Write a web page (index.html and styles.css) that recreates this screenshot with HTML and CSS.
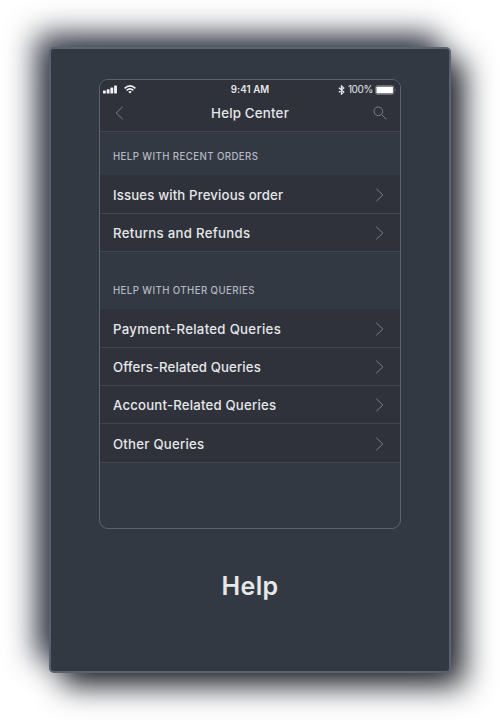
FILE: index.html
```
<!DOCTYPE html>
<html lang="en">
<head>
<meta charset="utf-8">
<title>Help Center</title>
<link rel="stylesheet" href="styles.css">
</head>
<body>
<main class="card">
  <div class="screen">
    <header class="header">
      <div class="status">
        <div class="status-left">
          <svg width="14" height="9" viewBox="0 0 14 9" fill="#f2f2f3"><rect x="0" y="5.4" width="2.8" height="3.2" rx=".6"/><rect x="3.7" y="4.2" width="2.8" height="4.4" rx=".6"/><rect x="7.4" y="2.4" width="2.8" height="6.2" rx=".6"/><rect x="11.1" y=".4" width="2.8" height="8.2" rx=".6"/></svg>
          <svg width="12" height="9" viewBox="0 0 12 9" fill="none" stroke="#f2f2f3" stroke-width="1.6"><path d="M.6 3.3Q6-1.5 11.4 3.3M2.6 5.4Q6 2.5 9.4 5.4"/><path d="M4.2 6.8Q6 5.4 7.8 6.8L6 8.6Z" fill="#f2f2f3" stroke="none"/></svg>
        </div>
        <span class="time">9:41 AM</span>
        <div class="status-right">
          <svg width="7" height="10" viewBox="0 0 7 10" fill="none" stroke="#e8e8ea" stroke-width="1.2"><path d="M.8 2.8 5.8 7 3.4 9.1V.9L5.8 3 .8 7.2"/></svg>
          <span class="percent">100%</span>
          <svg width="22" height="10" viewBox="0 0 22 10"><rect x=".5" y=".6" width="18.4" height="8.8" rx="1.8" fill="#5b5e66" stroke="#777a81" stroke-width=".8"/><rect x="1.5" y="1.8" width="16.4" height="6.4" rx=".5" fill="#fff"/><path d="M20 3.6Q21.3 5 20 6.4Z" fill="#8c8f95"/></svg>
        </div>
      </div>
      <div class="nav">
        <svg width="9" height="14" viewBox="0 0 9 14"><path class="line" d="M7.7.8 1.2 7l6.5 6.2"/></svg>
        <h1 class="title">Help Center</h1>
        <svg width="14" height="14" viewBox="0 0 14 14"><circle class="line" cx="5.3" cy="5.3" r="4.3"/><path class="line" d="m8.4 8.4 4.9 4.9"/></svg>
      </div>
    </header>
    <h2 class="section section-first"><span>HELP WITH RECENT ORDERS</span></h2>
    <div class="row"><span class="issues">Issues with Previous order</span><svg width="9" height="14" viewBox="0 0 9 14"><path class="line" d="M1.3.8 7.8 7l-6.5 6.2"/></svg></div>
    <div class="row"><span class="returns">Returns and Refunds</span><svg width="9" height="14" viewBox="0 0 9 14"><path class="line" d="M1.3.8 7.8 7l-6.5 6.2"/></svg></div>
    <h2 class="section section-second"><span>HELP WITH OTHER QUERIES</span></h2>
    <div class="row"><span class="payment">Payment-Related Queries</span><svg width="9" height="14" viewBox="0 0 9 14"><path class="line" d="M1.3.8 7.8 7l-6.5 6.2"/></svg></div>
    <div class="row"><span class="offers">Offers-Related Queries</span><svg width="9" height="14" viewBox="0 0 9 14"><path class="line" d="M1.3.8 7.8 7l-6.5 6.2"/></svg></div>
    <div class="row"><span class="account">Account-Related Queries</span><svg width="9" height="14" viewBox="0 0 9 14"><path class="line" d="M1.3.8 7.8 7l-6.5 6.2"/></svg></div>
    <div class="row"><span class="other">Other Queries</span><svg width="9" height="14" viewBox="0 0 9 14"><path class="line" d="M1.3.8 7.8 7l-6.5 6.2"/></svg></div>
  </div>
  <p class="caption">Help</p>
</main>
</body>
</html>
```
FILE: styles.css
```
* { box-sizing: border-box; }
body {
  margin: 0;
  height: 720px;
  overflow: hidden;
  padding: 47px 49px;
  background: #fff;
  font-family: Inter, "Liberation Sans", sans-serif;
  color: #e6e7e9;
}
.card {
  width: 402px;
  height: 626px;
  padding-top: 30px;
  display: flex;
  flex-direction: column;
  align-items: center;
  border: 2px solid #596372;
  border-radius: 5px;
  background: #333943;
  box-shadow: 13px 13px 30px #22262d, -13px -13px 30px #3a3e4b;
}
.screen {
  width: 302px;
  height: 450px;
  flex: none;
  overflow: hidden;
  border: 1px solid #596372;
  border-radius: 9px;
}
.header {
  height: 52px;
  background: #2f323b;
  border-bottom: 1px solid #414650;
}
.status {
  height: 19px;
  padding: 0 3px;
  display: grid;
  grid-template-columns: 1fr auto 1fr;
  align-items: center;
}
.status-left, .status-right { display: flex; align-items: center; }
.status-left { gap: 7px; }
.status-right { justify-content: flex-end; }
.time { font-size: 9.7px; font-weight: 600; letter-spacing: .1px; }
.percent { margin: 0 2px 1px 3px; font-size: 10px; letter-spacing: -.35px; }
.nav {
  height: 28px;
  padding: 0 13px 0 15px;
  display: flex;
  align-items: center;
  justify-content: space-between;
}
.line { fill: none; stroke: #7a808d; stroke-width: 1; }
.title { margin: 0 0 0 3px; font-size: 13.3px; line-height: 18px; font-weight: 500; letter-spacing: .2px; }
.section {
  margin: 0;
  padding: 0 13px;
  font-size: 9.7px;
  line-height: 12px;
  font-weight: 500;
  letter-spacing: .4px;
  color: #b4b8c0;
}
.section-first { height: 43.4px; padding-top: 19.4px; }
.section-second { height: 57px; padding-top: 33px; }
.row {
  height: 38.4px;
  padding: 1.4px 16px 0 13px;
  display: flex;
  align-items: center;
  justify-content: space-between;
  background: #2f323b;
  border-bottom: 1px solid #414650;
  font-size: 13.2px;
  font-weight: 500;
  line-height: 18px;
}
.row span { white-space: nowrap; }
.issues { letter-spacing: .15px; }
.returns { letter-spacing: .3px; }
.payment { letter-spacing: .31px; }
.offers { letter-spacing: .12px; }
.account { letter-spacing: .2px; }
.other { letter-spacing: .25px; }
.caption { margin: 39px 0 0; font-size: 25px; line-height: 36px; font-weight: 600; letter-spacing: .3px; }
```
